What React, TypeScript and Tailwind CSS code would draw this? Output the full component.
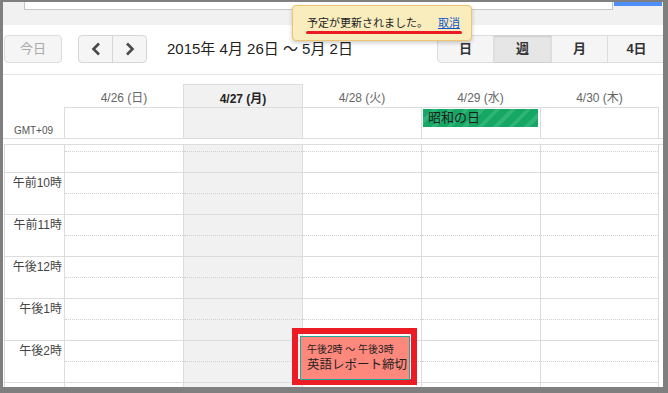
import React from "react";

const days = [
  { label: "4/26 (日)", w: "w-[119px]", today: false },
  { label: "4/27 (月)", w: "w-[119px]", today: true },
  { label: "4/28 (火)", w: "w-[119px]", today: false },
  { label: "4/29 (水)", w: "w-[119px]", today: false },
  { label: "4/30 (木)", w: "w-[118px]", today: false },
];

// last row is only a sliver at the bottom, so no label
const hours = ["午前10時", "午前11時", "午後12時", "午後1時", "午後2時", ""];

function Chevron({ dir }: { dir: "left" | "right" }) {
  return (
    <svg width="10" height="14" viewBox="0 0 10 14">
      <path
        d={dir === "left" ? "M8 1.5 L2.5 7 L8 12.5" : "M2 1.5 L7.5 7 L2 12.5"}
        fill="none"
        stroke="#4a4a4a"
        strokeWidth="2.6"
      />
    </svg>
  );
}

function DayColumn({ w, today }: { w: string; today: boolean }) {
  return (
    <div className={`${w} shrink-0 border-r border-[#dcdcdc] ${today ? "bg-[#f1f1f1]" : "bg-white"}`}>
      <div className="h-[28px] border-b border-[#dcdcdc] pt-[6px]">
        <div className="border-t border-dotted border-[#d0d0d0]" />
      </div>
      {hours.map((h, i) => (
        <div key={i} className="h-[42px] border-b border-[#dcdcdc] pt-[20px]">
          <div className="border-t border-dotted border-[#d0d0d0]" />
        </div>
      ))}
    </div>
  );
}

export default function App() {
  return (
    <div className="w-[668px] h-[393px] relative overflow-hidden bg-white border-[#7f7f7f] border-t-2 border-l-[3px] border-r-[5px] border-b-[6px] font-['Liberation_Sans','Noto_Sans_CJK_JP',sans-serif] text-[#222]">
      {/* top search strip */}
      <div className="h-[23px] bg-[#f1f1f1] flex items-start">
        <div className="ml-[21px] w-[589px] h-[8px] bg-white border border-t-0 border-[#c6c6c6]" />
        <div className="ml-auto mr-px w-[48px] h-[4px] bg-[#4d8ef9]" />
      </div>

      {/* toolbar */}
      <div className="mt-[10px] h-[28px] flex items-center">
        <button className="ml-px w-[58px] h-[28px] rounded-sm border border-[#dcdcdc] bg-[#f5f5f5] text-[13px] text-[#aaa]">
          今日
        </button>
        <div className="ml-[16px] flex h-[28px] rounded-sm border border-[#d6d6d6] bg-[#f5f5f5]">
          <div className="w-[34px] flex items-center justify-center border-r border-[#d6d6d6]">
            <Chevron dir="left" />
          </div>
          <div className="w-[33px] flex items-center justify-center">
            <Chevron dir="right" />
          </div>
        </div>
        <div className="ml-[20px] flex-1 text-[15px] text-[#222] whitespace-nowrap">2015年 4月 26日 ～ 5月 2日</div>
        <div className="w-[226px] shrink-0 overflow-hidden">
          <div className="flex w-[240px] h-[28px] text-[13px] font-bold text-[#333]">
            <div className="w-[57px] flex items-center justify-center border border-[#dcdcdc] bg-[#f5f5f5] rounded-l-sm">日</div>
            <div className="w-[57px] flex items-center justify-center border-y border-[#d0d0d0] bg-[#e6e6e6] shadow-[inset_0_1px_2px_rgba(0,0,0,0.1)]">週</div>
            <div className="w-[57px] flex items-center justify-center border border-[#dcdcdc] bg-[#f5f5f5]">月</div>
            <div className="w-[58px] flex items-center justify-center border border-l-0 border-[#dcdcdc] bg-[#f5f5f5]">4日</div>
          </div>
        </div>
      </div>

      {/* header */}
      <div className="mt-[11px] border-t border-[#e5e5e5]">
        <div className="mt-[9px] flex h-[23px] text-[12px]">
          <div className="w-[62px] shrink-0" />
          <div className="w-[118px] shrink-0 pt-[5px] text-center text-[#666]">{days[0].label}</div>
          <div className="w-[120px] shrink-0 pt-[5px] text-center font-bold text-[#222] bg-[#f1f1f1] border-x border-t border-[#dcdcdc]">
            {days[1].label}
          </div>
          <div className="w-[118px] shrink-0 pt-[5px] text-center text-[#666]">{days[2].label}</div>
          <div className="w-[119px] shrink-0 pt-[5px] text-center text-[#666]">{days[3].label}</div>
          <div className="w-[119px] shrink-0 pt-[5px] text-center text-[#666]">{days[4].label}</div>
        </div>
        <div className="flex h-[32px] border-b border-[#dcdcdc]">
          <div className="w-[62px] shrink-0 border-r border-[#dcdcdc] flex items-end justify-center pb-[2px] text-[10px] leading-none text-[#555]">
            GMT+09
          </div>
          {days.map((d, i) => (
            <div
              key={d.label}
              className={`${d.w} shrink-0 h-[31px] border-t border-r border-[#dcdcdc] ${d.today ? "bg-[#f1f1f1]" : "bg-white"}`}
            >
              {i === 3 && (
                <div className="mt-px ml-px w-[115px] h-[18px] pl-[5px] text-[13px] leading-[18px] text-[#1e1e1e] bg-[repeating-linear-gradient(135deg,#16a765_0px,#16a765_7px,#2db476_7px,#2db476_11px)]">
                  昭和の日
                </div>
              )}
            </div>
          ))}
        </div>
      </div>

      {/* time grid */}
      <div className="mt-[5px] ml-px flex border-l border-t border-[#dcdcdc]">
        <div className="w-[60px] shrink-0 border-r border-[#dcdcdc]">
          <div className="h-[28px] border-b border-[#dcdcdc]" />
          {hours.map((h, i) => (
            <div key={i} className="h-[42px] border-b border-[#dcdcdc] pr-[2px] pt-[1px] text-right text-[12px] text-[#444]">
              {h}
            </div>
          ))}
        </div>
        {days.map((d) => (
          <DayColumn key={d.label} w={d.w} today={d.today} />
        ))}
      </div>

      {/* toast */}
      <div className="absolute left-[289px] top-[3px] w-[180px] h-[36px] rounded-sm border border-[#f0c36d] bg-[#f9edbe] shadow-[0_2px_4px_rgba(0,0,0,0.2)] flex items-center pl-[14px] text-[11px] text-[#222]">
        <span>予定が更新されました。</span>
        <span className="ml-[10px] text-[#1155cc] underline">取消</span>
      </div>
      <div className="absolute left-[303px] top-[29px] w-[156px] h-[3px] rounded-full bg-[#ed1c24]" />

      {/* event */}
      <div className="absolute left-[289px] top-[326px] w-[125px] h-[57px] border-[6px] border-[#ed1c24]" />
      <div className="absolute left-[297px] top-[334px] w-[110px] h-[44px] border border-[#1fa89e] bg-[#ff887c] pl-[6px] pt-[6px] text-[#222] whitespace-nowrap">
        <div className="text-[10px] leading-[13px]">午後2時 ～ 午後3時</div>
        <div className="text-[12.5px] leading-[18px]">英語レポート締切</div>
      </div>
    </div>
  );
}
